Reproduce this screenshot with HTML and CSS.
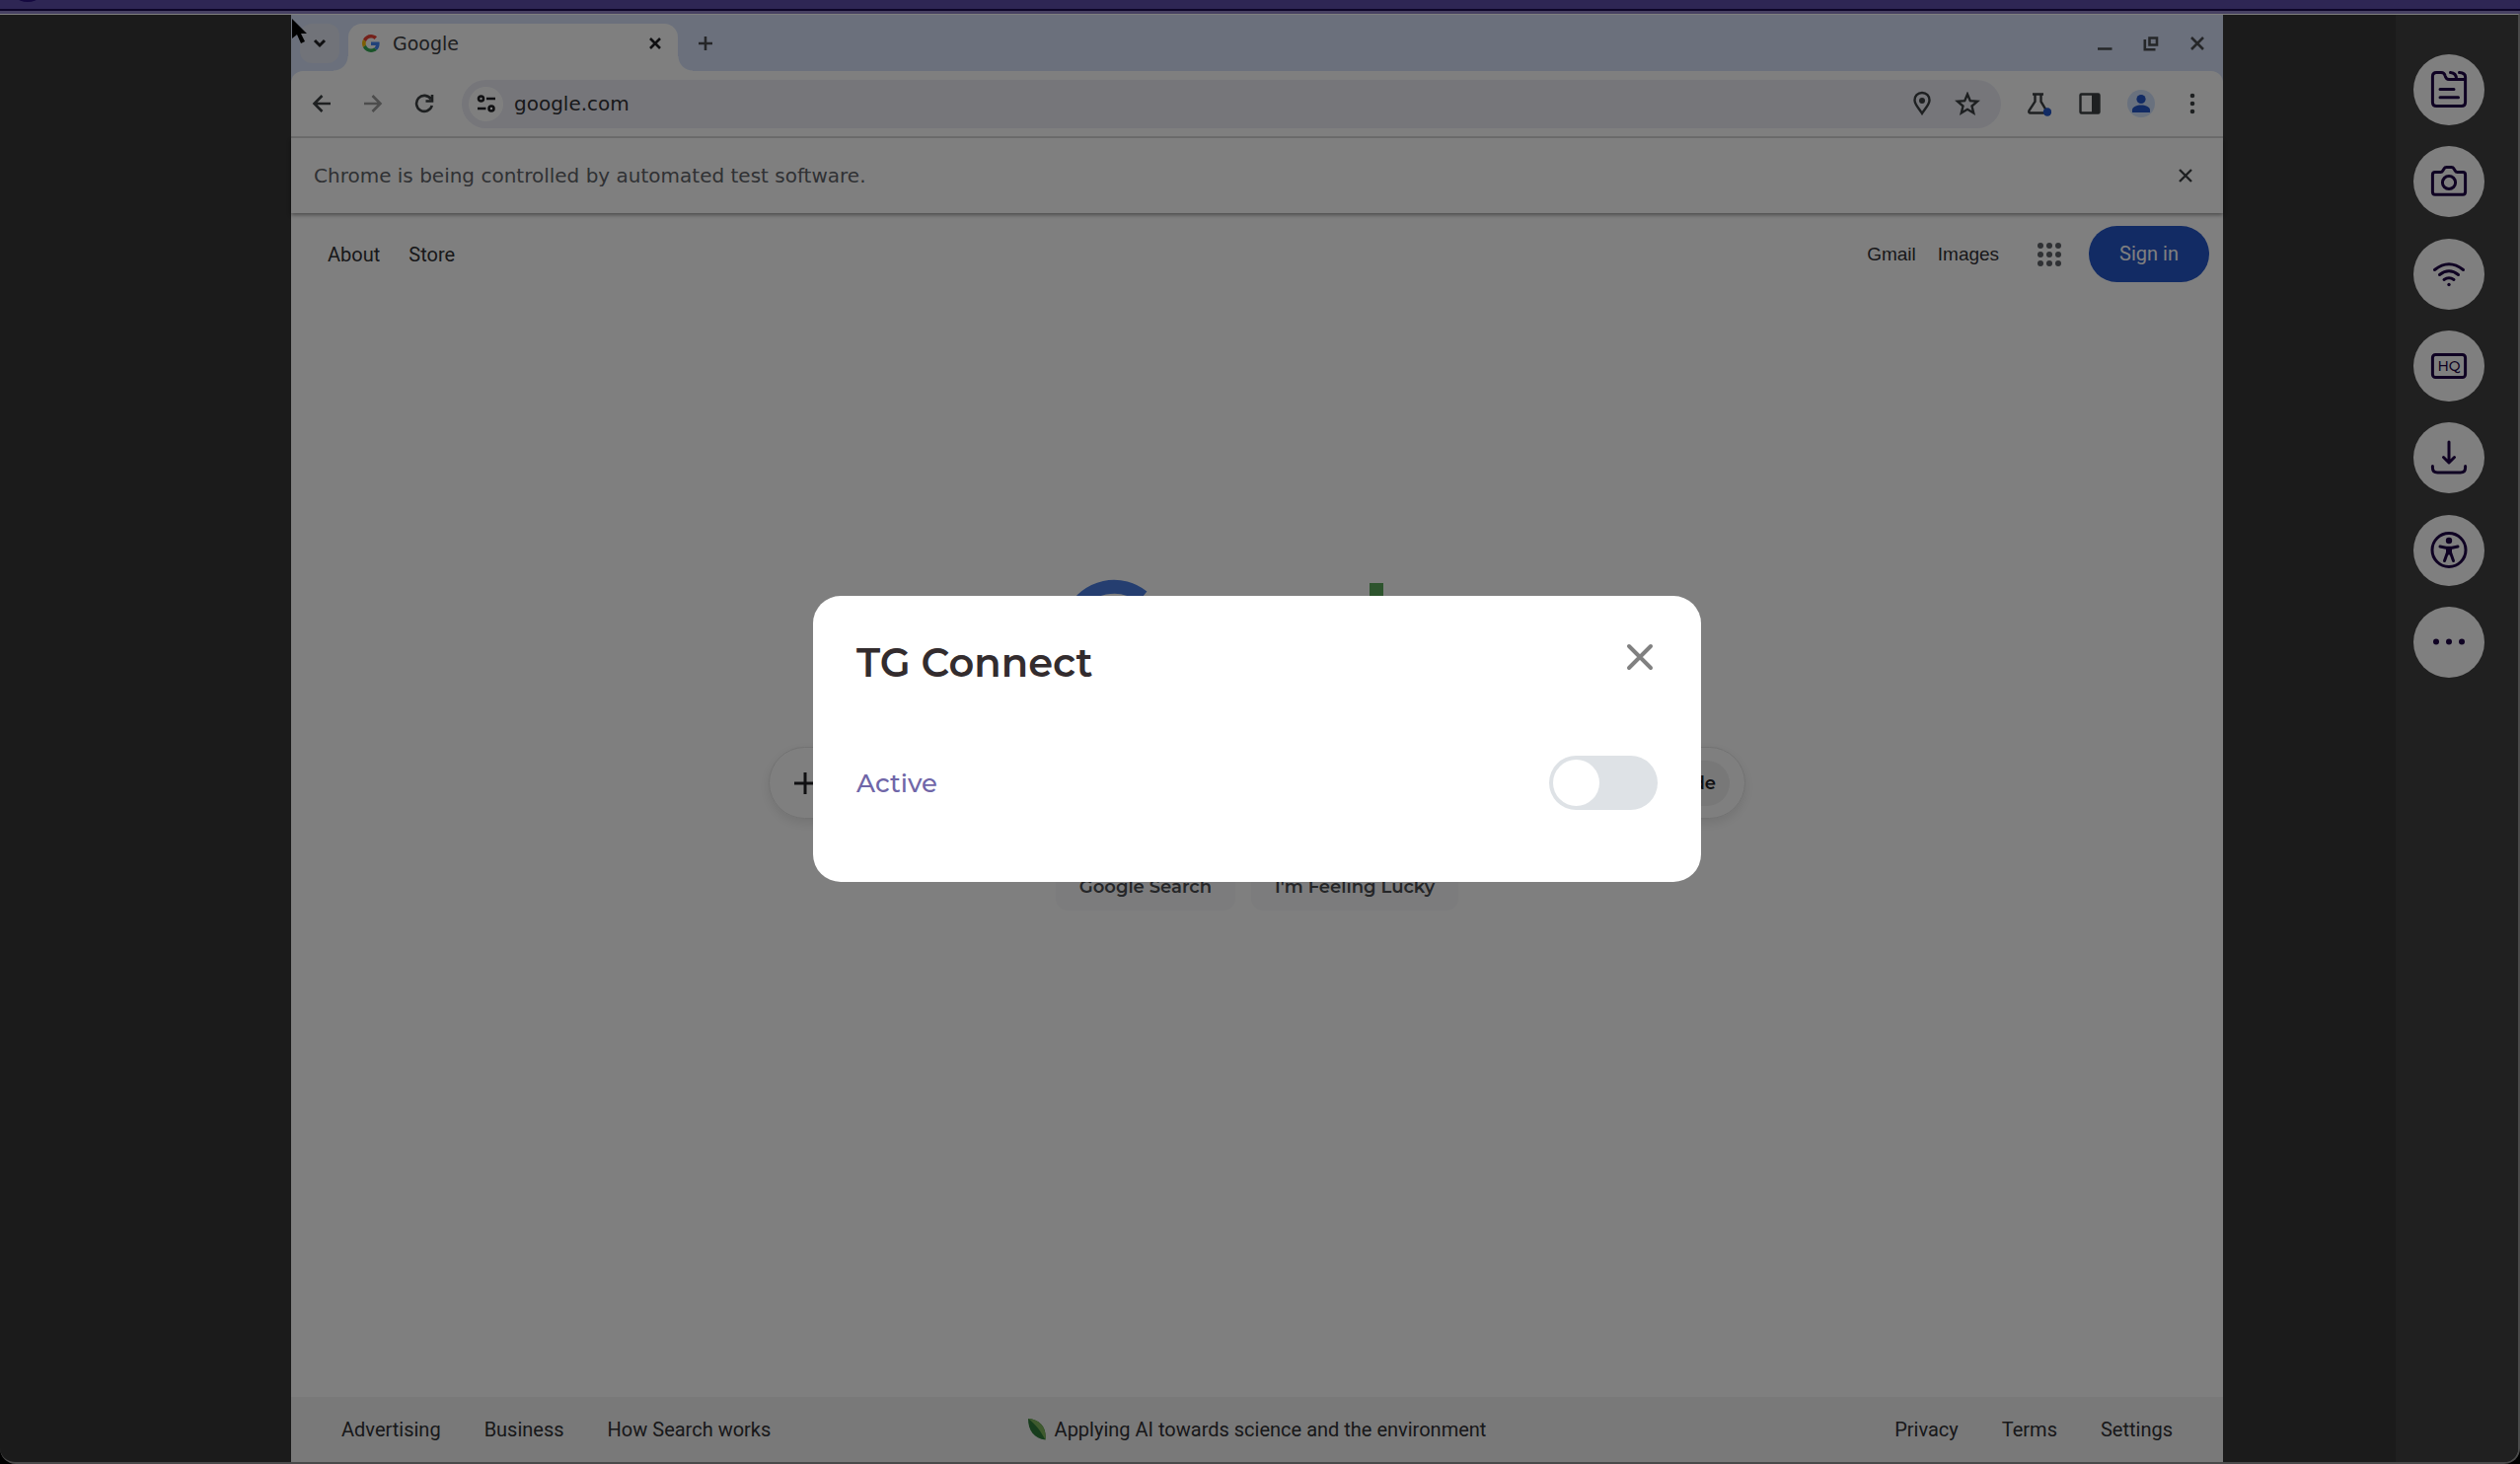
FILE: index.html
```html
<!DOCTYPE html>
<html lang="en">
<head>
    <meta charset="UTF-8">
    <meta name="viewport" content="width=device-width, initial-scale=1.0">
    <title>TG Connect</title>
    <link rel="stylesheet" href="styles.css">
</head>
<body>
    <div class="app">
        <div class="topbar"><span class="topbar-badge"></span></div>
        <div class="screen">
            <div class="browser">
                <svg class="cursor" width="16" height="27" viewBox="0 0 16 27"><path d="M0 0V20L5 16L9 25L13 23L9 15H15Z" fill="#000"/></svg>
                <div class="tabstrip">
                    <button class="tab-search" aria-label="Search tabs">
                        <svg width="14" height="10" viewBox="0 0 14 10"><path d="M2 2L7 7L12 2" fill="none" stroke="#202124" stroke-width="3"/></svg>
                    </button>
                    <div class="tab">
                        <svg width="18" height="18" viewBox="0 0 48 48">
                            <path fill="#EA4335" d="M24 9.5c3.54 0 6.71 1.22 9.21 3.6l6.85-6.85C35.9 2.38 30.47 0 24 0 14.62 0 6.51 5.38 2.56 13.22l7.98 6.19C12.43 13.72 17.74 9.5 24 9.5z"/>
                            <path fill="#4285F4" d="M46.98 24.55c0-1.57-.15-3.09-.38-4.55H24v9.02h12.94c-.58 2.96-2.26 5.48-4.78 7.18l7.73 6c4.51-4.18 7.09-10.36 7.09-17.65z"/>
                            <path fill="#FBBC05" d="M10.53 28.59c-.48-1.45-.76-2.99-.76-4.59s.27-3.14.76-4.59l-7.98-6.19C.92 16.46 0 20.12 0 24c0 3.88.92 7.54 2.56 10.78l7.97-6.19z"/>
                            <path fill="#34A853" d="M24 48c6.48 0 11.93-2.13 15.89-5.81l-7.73-6c-2.15 1.45-4.92 2.3-8.16 2.3-6.26 0-11.57-4.22-13.47-9.91l-7.98 6.19C6.51 42.62 14.62 48 24 48z"/>
                        </svg>
                        <span class="tab-title">Google</span>
                        <button class="tab-close" aria-label="Close tab">
                            <svg width="14" height="14" viewBox="0 0 14 14"><path d="M2 2L12 12M12 2L2 12" stroke="#202124" stroke-width="2.600"/></svg>
                        </button>
                    </div>
                    <button class="new-tab" aria-label="New tab">
                        <svg width="16" height="16" viewBox="0 0 16 16"><path d="M8 1V15M1 8H15" stroke="#4a4d51" stroke-width="2.600"/></svg>
                    </button>
                    <div class="window-controls">
                        <button aria-label="Minimize"><svg width="16" height="16" viewBox="0 0 16 16"><path d="M1 13.500H15.500" stroke="#4a4d51" stroke-width="2.600"/></svg></button>
                        <button aria-label="Restore"><svg width="16" height="16" viewBox="0 0 16 16"><path d="M6.500 2.500H14V9.500H6.500ZM1.800 4V14.200H12.500" fill="none" stroke="#4a4d51" stroke-width="2.600"/></svg></button>
                        <button aria-label="Close"><svg width="16" height="16" viewBox="0 0 16 16"><path d="M2 2L14 14M14 2L2 14" stroke="#4a4d51" stroke-width="2.600"/></svg></button>
                    </div>
                </div>

                <div class="toolbar">
                    <button aria-label="Back"><svg width="20" height="20" viewBox="0 0 20 20"><path d="M19 10H3M10.500 2L2.500 10L10.500 18" fill="none" stroke="#3c4043" stroke-width="2.600"/></svg></button>
                    <button aria-label="Forward"><svg width="20" height="20" viewBox="0 0 20 20"><path d="M1 10H17M9.500 2L17.500 10L9.500 18" fill="none" stroke="#9a9a9a" stroke-width="2.600"/></svg></button>
                    <button aria-label="Reload"><svg width="20" height="20" viewBox="0 0 20 20"><path d="M16.800 5.500A8 8 0 1 0 17.800 12M18 1V7.500H11.500" fill="none" stroke="#3c4043" stroke-width="2.600"/></svg></button>
                    <div class="omnibox">
                        <button class="site-info" aria-label="Site information">
                            <svg width="20" height="18" viewBox="0 0 20 18"><g fill="none" stroke="#202124" stroke-width="2.600"><circle cx="4.500" cy="4" r="2.500"/><path d="M10 4H19M1 14H9.500"/><circle cx="15" cy="14" r="2.500"/></g></svg>
                        </button>
                        <input type="text" value="google.com" aria-label="Address">
                        <button aria-label="Location"><svg width="20" height="26" viewBox="0 0 20 26"><path d="M10 2C5.500 2 2.500 5.200 2.500 9.500C2.500 14 7 18 10 23C13 18 17.500 14 17.500 9.500C17.500 5.200 14.500 2 10 2Z" fill="none" stroke="#3c4043" stroke-width="2.400"/><circle cx="10" cy="10" r="3" fill="#3c4043"/></svg></button>
                        <button aria-label="Bookmark"><svg width="26" height="24" viewBox="0 0 26 24"><path d="M13 2.500L15.800 9.200L23 9.800L17.500 14.500L19.200 21.500L13 17.800L6.800 21.500L8.500 14.500L3 9.800L10.200 9.200Z" fill="none" stroke="#3c4043" stroke-width="2.400"/></svg></button>
                    </div>
                    <button aria-label="Experiments"><svg width="26" height="26" viewBox="0 0 26 26"><path d="M7 3.500H18M9.500 3.500V11L3.500 20Q2.500 22.500 5 22.500H20L21 20L15.500 11V3.500" fill="none" stroke="#3c4043" stroke-width="2.400"/><circle cx="22" cy="21.500" r="4.200" fill="#2456c8"/></svg></button>
                    <button aria-label="Side panel"><svg width="22" height="22" viewBox="0 0 22 22"><rect x="1.500" y="1.500" width="19" height="19" rx="1" fill="none" stroke="#3c4043" stroke-width="2.400"/><path d="M13 1H20.500V21H13Z" fill="#3c4043"/></svg></button>
                    <button aria-label="Profile"><svg width="28" height="28" viewBox="0 0 28 28"><circle cx="14" cy="14" r="14" fill="#d3e3fd"/><circle cx="14" cy="9.500" r="4.600" fill="#2456c8"/><path d="M5 23V20.500C5 17 10 15.500 14 15.500S23 17 23 20.500V23Z" fill="#2456c8"/></svg></button>
                    <button aria-label="Menu"><svg width="6" height="22" viewBox="0 0 6 22"><g fill="#3c4043"><circle cx="3" cy="3" r="2.300"/><circle cx="3" cy="11" r="2.300"/><circle cx="3" cy="19" r="2.300"/></g></svg></button>
                </div>

                <div class="infobar">
                    <span>Chrome is being controlled by automated test software.</span>
                    <button aria-label="Dismiss"><svg width="16" height="16" viewBox="0 0 16 16"><path d="M2 2L14 14M14 2L2 14" stroke="#3c4043" stroke-width="2.400"/></svg></button>
                </div>

                <div class="page">
                    <header class="page-header">
                        <a href="#">About</a>
                        <a href="#">Store</a>
                        <nav class="account">
                            <a href="#">Gmail</a>
                            <a href="#">Images</a>
                            <button class="apps" aria-label="Google apps">
                                <svg width="24" height="24" viewBox="0 0 24 24"><g fill="#5f6368"><circle cx="3" cy="3" r="3"/><circle cx="12" cy="3" r="3"/><circle cx="21" cy="3" r="3"/><circle cx="3" cy="12" r="3"/><circle cx="12" cy="12" r="3"/><circle cx="21" cy="12" r="3"/><circle cx="3" cy="21" r="3"/><circle cx="12" cy="21" r="3"/><circle cx="21" cy="21" r="3"/></g></svg>
                            </button>
                            <a href="#" class="sign-in">Sign in</a>
                        </nav>
                    </header>

                    <main class="search">
                        <svg class="logo" width="408" height="138" viewBox="0 0 408 138" role="img" aria-label="Google">
                            <g fill="none" stroke-width="14">
                                <path d="M88 18A46 46 0 1 0 105 56H60" stroke="#4a7de0"/>
                                <circle cx="152" cy="73" r="28" stroke="#ea4335"/>
                                <circle cx="221" cy="73" r="28" stroke="#fbbc05"/>
                                <circle cx="285" cy="73" r="26" stroke="#4a7de0"/>
                                <circle cx="374" cy="73" r="26" stroke="#ea4335"/>
                            </g>
                            <rect x="318" y="4" width="14" height="103" fill="#5aa85a"/>
                        </svg>
                        <form class="search-box">
                            <svg width="22" height="22" viewBox="0 0 22 22"><path d="M11 0V22M0 11H22" stroke="#202124" stroke-width="3"/></svg>
                            <input type="text" aria-label="Search">
                            <button type="button">AI Mode</button>
                        </form>
                        <div class="search-actions">
                            <button>Google Search</button>
                            <button>I'm Feeling Lucky</button>
                        </div>
                    </main>

                    <footer class="page-footer">
                        <nav>
                            <a href="#">Advertising</a>
                            <a href="#">Business</a>
                            <a href="#">How Search works</a>
                        </nav>
                        <a href="#" class="promo">
                            <svg width="18" height="22" viewBox="0 0 18 22"><path d="M0 0C12 1 19 9 17.500 21.500C6 20 0 12 0 0Z" fill="#2f7a3a"/><path d="M0 0C12 1 19 9 17.500 21.500C13 13 8 6 0 0Z" fill="#7fb55c"/></svg>
                            Applying AI towards science and the environment
                        </a>
                        <nav class="legal">
                            <a href="#">Privacy</a>
                            <a href="#">Terms</a>
                            <a href="#">Settings</a>
                        </nav>
                    </footer>
                </div>
            </div>

            <aside class="sidebar">
                <div class="tools">
                    <button aria-label="Notes"><svg viewBox="0 0 72 72"><path d="M52.600 25.500V48.500Q52.600 52.500 48.600 52.500H23.400Q19.400 52.500 19.400 48.500V22.500Q19.400 18.500 23.400 18.500H28Q31.500 18.500 32.200 22Q33 25.500 36 25.500H52.600V23Q52.600 19 46.500 18.500M37.500 18.500Q43.500 19 43.500 25M27 35.500H41M27 43.700H45.500"/></svg></button>
                    <button aria-label="Screenshot"><svg viewBox="0 0 72 72"><path d="M22 26.500H27.500Q29 26.500 29.800 25L31 23Q31.800 21.500 33.500 21.500H38.500Q40.200 21.500 41 23L42.200 25Q43 26.500 44.500 26.500H50Q52.600 26.500 52.600 29.200V46.500Q52.600 49.200 50 49.200H22Q19.400 49.200 19.400 46.500V29.200Q19.400 26.500 22 26.500Z"/><circle cx="36" cy="37" r="6.600"/></svg></button>
                    <button aria-label="Network"><svg viewBox="0 0 72 72"><path d="M21.500 31.500Q36 20 50.500 31.500M26.500 36.500Q36 29 45.500 36.500M31 41.500Q36 38 41 41.500"/><circle class="solid" cx="36" cy="46.500" r="1.700"/></svg></button>
                    <button aria-label="Quality"><svg viewBox="0 0 72 72"><rect x="19.400" y="24.500" width="33.200" height="23" rx="3"/><text x="36" y="41" text-anchor="middle">HQ</text></svg></button>
                    <button aria-label="Download"><svg viewBox="0 0 72 72"><path d="M36 20V40.500M30.500 35.500L36 41L41.500 35.500M19.400 44.500V46Q19.400 51 24.400 51H47.600Q52.600 51 52.600 46V44.500"/></svg></button>
                    <button aria-label="Accessibility"><svg viewBox="0 0 72 72"><circle cx="36" cy="35.500" r="17"/><circle class="solid" cx="36" cy="26" r="3.200"/><path d="M27 32L33 33.200H39L45 32M34.500 34V38L31.500 46.500M37.500 34V38L40.500 46.500M36 34V39"/></svg></button>
                    <button aria-label="More"><svg viewBox="0 0 72 72"><circle class="solid" cx="23" cy="35.500" r="3"/><circle class="solid" cx="36" cy="35.500" r="3"/><circle class="solid" cx="49" cy="35.500" r="3"/></svg></button>
                </div>
            </aside>
        </div>
    </div>

    <div class="overlay">
        <div class="modal" role="dialog" aria-labelledby="modalTitle">
            <div class="modal-header">
                <h2 id="modalTitle">TG Connect</h2>
                <button class="modal-close" aria-label="Close">
                    <svg width="28" height="28" viewBox="0 0 28 28"><path d="M3 3L25 25M25 3L3 25" stroke="#808080" stroke-width="4" stroke-linecap="round"/></svg>
                </button>
            </div>
            <div class="modal-row">
                <label for="activeToggle">Active</label>
                <input type="checkbox" id="activeToggle" class="switch">
            </div>
        </div>
    </div>
</body>
</html>
```

FILE: styles.css
```css
* {
    box-sizing: border-box;
}
body {
    margin: 0;
    background: #000;
    font-family: Roboto, sans-serif;
}
button {
    display: flex;
    align-items: center;
    justify-content: center;
    padding: 0;
    border: none;
    background: none;
    cursor: pointer;
}
a {
    color: #303134;
    text-decoration: none;
}
.app {
    display: flex;
    flex-direction: column;
    min-height: 100vh;
}
.topbar {
    height: 14px;
    background: #5c4ca8;
    border-bottom: 3px solid #8f82c4;
    box-shadow: inset 0 -2px #1b0a50;
    overflow: hidden;
}
.topbar-badge {
    display: block;
    width: 40px;
    height: 40px;
    margin: -38px 0 0 8px;
    border-radius: 50%;
    background: #28107e;
}
.screen {
    flex: 1;
    display: grid;
    grid-template-columns: 1fr 124px;
    background: #363636;
    border: 2px solid #949494;
    border-top: 1px solid #fff;
    border-left: none;
    border-radius: 0 0 16px 16px;
    overflow: hidden;
}

/* remote browser */
.browser {
    position: relative;
    display: flex;
    flex-direction: column;
    margin: 0 175px 0 295px;
    background: #fff;
}
.cursor {
    position: absolute;
    left: 1px;
    top: 4px;
}
.tabstrip {
    display: flex;
    align-items: center;
    height: 57px;
    padding: 0 3px 0 9px;
    background: #d6e1f8;
}
.tab-search {
    width: 40px;
    height: 40px;
    margin-right: 9px;
    border-radius: 12px;
    background: #e2e6f2;
}
.tab {
    position: relative;
    align-self: flex-end;
    display: flex;
    align-items: center;
    width: 334px;
    height: 48px;
    padding: 0 16px 8px 14px;
    background: #fff;
    border-radius: 14px 14px 0 0;
}
.tab::before, .tab::after {
    content: "";
    position: absolute;
    bottom: 0;
    width: 15px;
    height: 15px;
}
.tab::before {
    left: -15px;
    background: radial-gradient(circle at 0 0, transparent 14px, #fff 15px);
}
.tab::after {
    right: -15px;
    background: radial-gradient(circle at 100% 0, transparent 14px, #fff 15px);
}
.tab-title {
    flex: 1;
    margin-left: 13px;
    font: 19px "DejaVu Sans", sans-serif;
    color: #3c4043;
}
.new-tab {
    width: 40px;
    height: 40px;
    margin-left: 8px;
}
.window-controls {
    display: flex;
    margin-left: auto;
}
.window-controls button {
    width: 47px;
    height: 40px;
}
.toolbar {
    display: flex;
    align-items: center;
    height: 68px;
    padding: 0 5px;
    background: #fff;
    border-bottom: 2px solid #dcdcdc;
    border-radius: 12px 12px 0 0;
    box-shadow: 0 -12px #d6e1f8;
    clip-path: inset(0);
}
.toolbar > button {
    width: 52px;
    height: 48px;
}
.omnibox {
    flex: 1;
    display: flex;
    align-items: center;
    height: 49px;
    margin: 0 12px;
    padding: 0 11px 0 7px;
    border-radius: 25px;
    background: #ecedf5;
}
.omnibox button {
    width: 46px;
    height: 40px;
}
.omnibox .site-info {
    width: 35px;
    height: 35px;
    border-radius: 50%;
    background: #fff;
}
.omnibox input {
    flex: 1;
    padding: 0 0 0 11px;
    border: none;
    background: none;
    font: 20px "DejaVu Sans", sans-serif;
    color: #303134;
}
.infobar {
    position: relative;
    display: flex;
    align-items: center;
    justify-content: space-between;
    height: 76px;
    padding: 0 30px 0 23px;
    background: #fff;
    box-shadow: 0 2px 4px rgba(0, 0, 0, 0.4);
    font: 20px "DejaVu Sans", sans-serif;
    color: #5f6368;
}

/* google start page */
.page {
    flex: 1;
    display: flex;
    flex-direction: column;
    font-size: 20px;
}
.page-header {
    display: flex;
    align-items: center;
    gap: 29px;
    height: 83px;
    padding: 0 14px 0 37px;
}
.account {
    display: flex;
    align-items: center;
    gap: 22px;
    margin-left: auto;
    font: 19px "Liberation Sans", sans-serif;
}
.apps {
    margin: 0 6px 0 17px;
}
.sign-in {
    padding: 0 31px;
    border-radius: 29px;
    background: #2456c8;
    font: 20px/57px Roboto, sans-serif;
    color: #fff;
}
.search {
    flex: 1;
    display: flex;
    flex-direction: column;
    align-items: center;
}
.logo {
    margin: 288px 0 32px;
}
.search-box {
    display: flex;
    align-items: center;
    width: 990px;
    max-width: 90%;
    height: 73px;
    padding: 0 15px 0 25px;
    border: 1px solid #e4e4e4;
    border-radius: 37px;
    box-shadow: 0 4px 12px rgba(0, 0, 0, 0.1);
}
.search-box input {
    flex: 1;
    border: none;
    background: none;
    font-size: 20px;
}
.search-box button {
    height: 46px;
    padding: 0 14px;
    border-radius: 23px;
    background: #f0f0f0;
    font: 600 18px Montserrat, Inter, sans-serif;
    color: #202124;
}
.search-actions {
    display: flex;
    gap: 16px;
    margin-top: 45px;
}
.search-actions button {
    height: 48px;
    padding: 0 24px;
    border-radius: 12px;
    background: #f8f9fa;
    font: 600 18px Montserrat, Inter, sans-serif;
    color: #4a4d51;
}
.page-footer {
    display: grid;
    grid-template-columns: 1fr auto 1fr;
    align-items: center;
    height: 66px;
    padding: 0 51px;
    background: #f2f2f2;
}
.page-footer nav {
    display: flex;
    gap: 44px;
}
.page-footer .legal {
    justify-content: flex-end;
}
.promo {
    display: flex;
    align-items: center;
    gap: 9px;
}

/* right hand tools */
.sidebar {
    padding: 40px 0 0 18px;
    background: #404040;
}
.tools {
    display: flex;
    flex-direction: column;
    justify-content: space-between;
    height: 632px;
}
.tools button {
    width: 72px;
    height: 72px;
    border-radius: 50%;
    background: #fff;
}
.tools svg {
    width: 72px;
    height: 72px;
    fill: none;
    stroke: #1e0446;
    stroke-width: 3;
    stroke-linecap: round;
    stroke-linejoin: round;
}
.tools .solid, .tools text {
    fill: #1e0446;
    stroke: none;
}
.tools text {
    font: 500 14px Montserrat, Inter, sans-serif;
}

/* modal */
.overlay {
    position: fixed;
    inset: 0;
    display: flex;
    align-items: center;
    justify-content: center;
    padding: 14px 6px 0 0;
    background: rgba(0, 0, 0, 0.5);
}
.modal {
    width: 900px;
    max-width: 90%;
    padding: 36px 44px 73px;
    border-radius: 28px;
    background: #fff;
    font-family: Montserrat, Inter, sans-serif;
}
.modal-header {
    display: flex;
    align-items: flex-start;
    justify-content: space-between;
    margin-bottom: 62px;
}
.modal-header h2 {
    margin: 0;
    font-size: 40px;
    line-height: 64px;
    font-weight: 600;
    color: #332c2e;
}
.modal-close {
    width: 36px;
    height: 52px;
}
.modal-row {
    display: flex;
    align-items: center;
    justify-content: space-between;
}
.modal-row label {
    font-size: 26px;
    font-weight: 500;
    color: #7066a8;
}
.switch {
    appearance: none;
    width: 110px;
    height: 55px;
    margin: 0;
    padding: 4px;
    border-radius: 28px;
    background: #dee2e6;
    cursor: pointer;
}
.switch::before {
    content: "";
    display: block;
    width: 47px;
    height: 47px;
    border-radius: 50%;
    background: #fff;
}
.switch:checked {
    background: #7066a8;
}
.switch:checked::before {
    margin-left: auto;
}
```
